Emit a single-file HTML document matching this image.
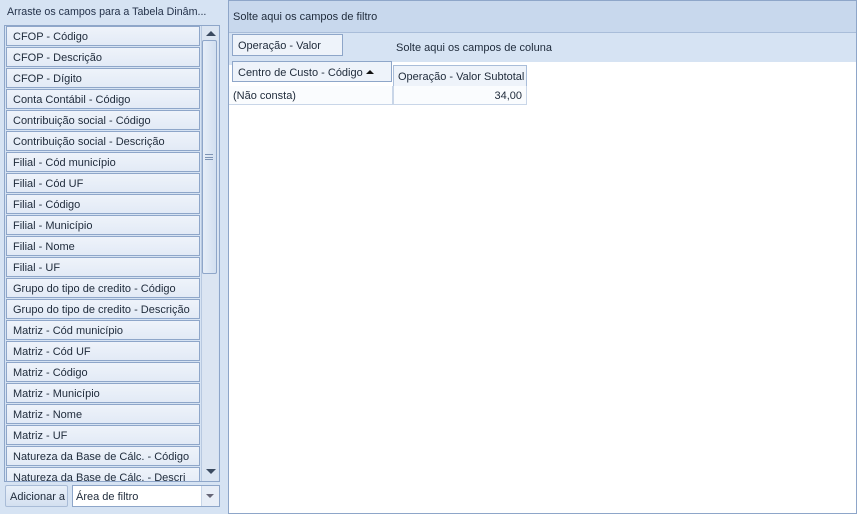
<html><head><style>
body{margin:0;width:857px;height:514px;background:#d6e3f3;font-family:"Liberation Sans",sans-serif;font-size:11px;color:#1e2a3a;position:relative;overflow:hidden}
.a{position:absolute;box-sizing:border-box}
.it{position:absolute;left:6px;width:194px;height:20px;background:linear-gradient(#eef3fa,#e2eaf6);border:1px solid #8ea6c9;padding:4px 0 0 6px;box-sizing:border-box;white-space:nowrap;overflow:hidden}
</style></head><body>
<div class="a" style="left:7px;top:6px;font-size:10.7px;color:#24324a">Arraste os campos para a Tabela Dinâm...</div>
<div class="a" style="left:4px;top:25px;width:216px;height:457px;border:1px solid #8ea6c9;background:#d6e3f3;overflow:hidden">
<div id="lst"></div>
</div>
<div class="a" style="left:201px;top:26px;width:17px;height:455px;background:#dbe5f2;border-left:1px solid #b8c9e0"></div>
<div class="a" style="left:206px;top:31px;width:0;height:0;border-left:5px solid transparent;border-right:5px solid transparent;border-bottom:5px solid #3a4a60"></div>
<div class="a" style="left:202px;top:40px;width:15px;height:234px;border:1px solid #8ea6c9;border-radius:2px;background:linear-gradient(90deg,#e6eef8,#d2dff0)"></div>
<div class="a" style="left:205px;top:154px;width:8px;height:6px;border-top:1px solid #7c93b4;border-bottom:1px solid #7c93b4"><div style="margin-top:2px;border-top:1px solid #7c93b4"></div></div>
<div class="a" style="left:206px;top:469px;width:0;height:0;border-left:5px solid transparent;border-right:5px solid transparent;border-top:5px solid #3a4a60"></div>
<div class="a" style="left:5px;top:485px;width:63px;height:22px;border:1px solid #a9bcd7;border-radius:2px;background:linear-gradient(#e9f0f9,#d4e0f0);padding:5px 0 0 4px">Adicionar a</div>
<div class="a" style="left:72px;top:485px;width:148px;height:22px;border:1px solid #8ea6c9;background:#fff;padding:5px 0 0 3px">Área de filtro</div>
<div class="a" style="left:201px;top:486px;width:18px;height:20px;background:#e8eef7;border-left:1px solid #c8d6e8"></div>
<div class="a" style="left:206px;top:494px;border-left:4px solid transparent;border-right:4px solid transparent;border-top:4px solid #667"></div>

<div class="a" style="left:228px;top:0;width:629px;height:514px;border:1px solid #8ea6c9;background:#fff"></div>
<div class="a" style="left:229px;top:1px;width:627px;height:32px;background:#c8d8ed;border-bottom:1px solid #a9bdd9;padding:10px 0 0 4px">Solte aqui os campos de filtro</div>
<div class="a" style="left:229px;top:33px;width:627px;height:29px;background:#d6e3f3"></div>
<div class="a" style="left:229px;top:62px;width:163px;height:3px;background:#d6e3f3"></div>
<div class="a" style="left:396px;top:42px">Solte aqui os campos de coluna</div>
<div class="a" style="left:232px;top:34px;width:111px;height:22px;border:1px solid #8ea6c9;background:#eef3fa;padding:5px 0 0 5px">Operação - Valor</div>
<div class="a" style="left:232px;top:61px;width:160px;height:21px;border:1px solid #8ea6c9;background:#eef3fa;padding:5px 0 0 5px">Centro de Custo - Código</div>
<div class="a" style="left:366px;top:70px;border-left:4px solid transparent;border-right:4px solid transparent;border-bottom:4px solid #111"></div>
<div class="a" style="left:393px;top:65px;width:134px;height:22px;border:1px solid #a9bdd9;background:#eef3fa;padding:5px 0 0 4px">Operação - Valor Subtotal</div>
<div class="a" style="left:229px;top:86px;width:164px;height:19px;border-bottom:1px solid #c9d6e8;border-right:1px solid #c9d6e8;background:#fafcfe;padding:4px 0 0 4px">(Não consta)</div>
<div class="a" style="left:393px;top:86px;width:134px;height:19px;border:1px solid #c9d6e8;border-top:0;background:#fafcfe;padding:4px 4px 0 0;text-align:right">34,00</div>
<script>
var n=["CFOP - Código","CFOP - Descrição","CFOP - Dígito","Conta Contábil - Código","Contribuição social - Código","Contribuição social - Descrição","Filial - Cód município","Filial - Cód UF","Filial - Código","Filial - Município","Filial - Nome","Filial - UF","Grupo do tipo de credito - Código","Grupo do tipo de credito - Descrição","Matriz - Cód município","Matriz - Cód UF","Matriz - Código","Matriz - Município","Matriz - Nome","Matriz - UF","Natureza da Base de Cálc. - Código","Natureza da Base de Cálc. - Descri"];
var h="";for(var i=0;i<n.length;i++)h+='<div class="it" style="left:1px;top:'+(i*21)+'px">'+n[i]+'</div>';
document.getElementById("lst").innerHTML=h;
</script>
</body></html>
